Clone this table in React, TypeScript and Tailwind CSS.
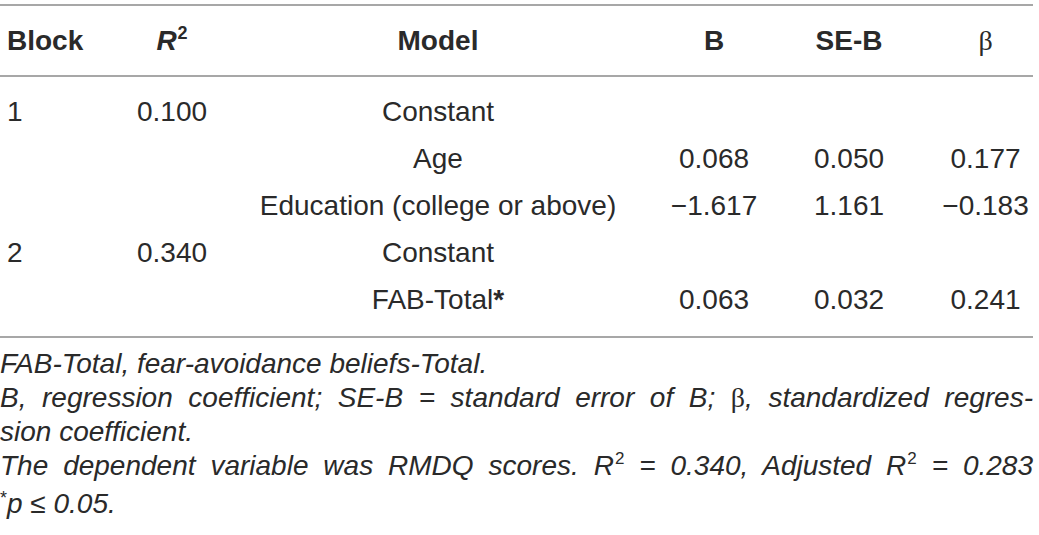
import React from "react";

type Row = {
  block?: string;
  r2?: string;
  model: React.ReactNode;
  b?: string;
  seb?: string;
  beta?: string;
};

const rows: Row[] = [
  { block: "1", r2: "0.100", model: "Constant" },
  { model: "Age", b: "0.068", seb: "0.050", beta: "0.177" },
  { model: "Education (college or above)", b: "\u22121.617", seb: "1.161", beta: "\u22120.183" },
  { block: "2", r2: "0.340", model: "Constant" },
  {
    model: (
      <>
        FAB-Total<span className="font-bold">*</span>
      </>
    ),
    b: "0.063",
    seb: "0.032",
    beta: "0.241",
  },
];

const grid = "grid grid-cols-[100px_144px_388px_164px_106px_131px] items-center";

function Beta() {
  return <span className="font-['Liberation_Serif',serif] not-italic font-normal">β</span>;
}

function Sup({ size }: { size: string }) {
  return <span className={`${size} not-italic relative top-[-11px] ml-[1px]`}>2</span>;
}

export default function App() {
  return (
    <div className="w-[1039px] h-[535px] bg-white text-[#2a2a2a] font-['Liberation_Sans',Arial,sans-serif] text-[28px]">
      <div className="w-[1033px] pt-[4px]">
        {/* header */}
        <div className={`${grid} h-[73px] border-y-2 border-[#a7a7a7] font-bold`}>
          <div className="pl-[7px]">Block</div>
          <div className="text-center italic">
            R<Sup size="text-[18px]" />
          </div>
          <div className="text-center">Model</div>
          <div className="text-center">B</div>
          <div className="text-center">SE-B</div>
          <div className="text-center pl-[36px]">
            <Beta />
          </div>
        </div>

        {/* body */}
        <div className="pt-[11px] pb-[13px] border-b-2 border-[#a7a7a7]">
          {rows.map((r, i) => (
            <div key={i} className={`${grid} h-[47px]`}>
              <div className="pl-[7px]">{r.block}</div>
              <div className="text-center">{r.r2}</div>
              <div className="text-center">{r.model}</div>
              <div className="text-center">{r.b}</div>
              <div className="text-center">{r.seb}</div>
              <div className="text-center pl-[36px]">{r.beta}</div>
            </div>
          ))}
        </div>

        {/* footnotes */}
        <div className="pt-[9px] italic leading-[34px] text-[28px]">
          <div>FAB-Total, fear-avoidance beliefs-Total.</div>
          <div className="text-justify [text-align-last:justify]">
            B, regression coefficient; SE-B = standard error of B; <Beta />, standardized regres-
          </div>
          <div>sion coefficient.</div>
          <div className="text-justify [text-align-last:justify]">
            The dependent variable was RMDQ scores. R<Sup size="text-[17px]" /> = 0.340, Adjusted R
            <Sup size="text-[17px]" /> = 0.283
          </div>
          <div>
            <span className="not-italic text-[18px] relative top-[-9px]">*</span>p ≤ 0.05.
          </div>
        </div>
      </div>
    </div>
  );
}
